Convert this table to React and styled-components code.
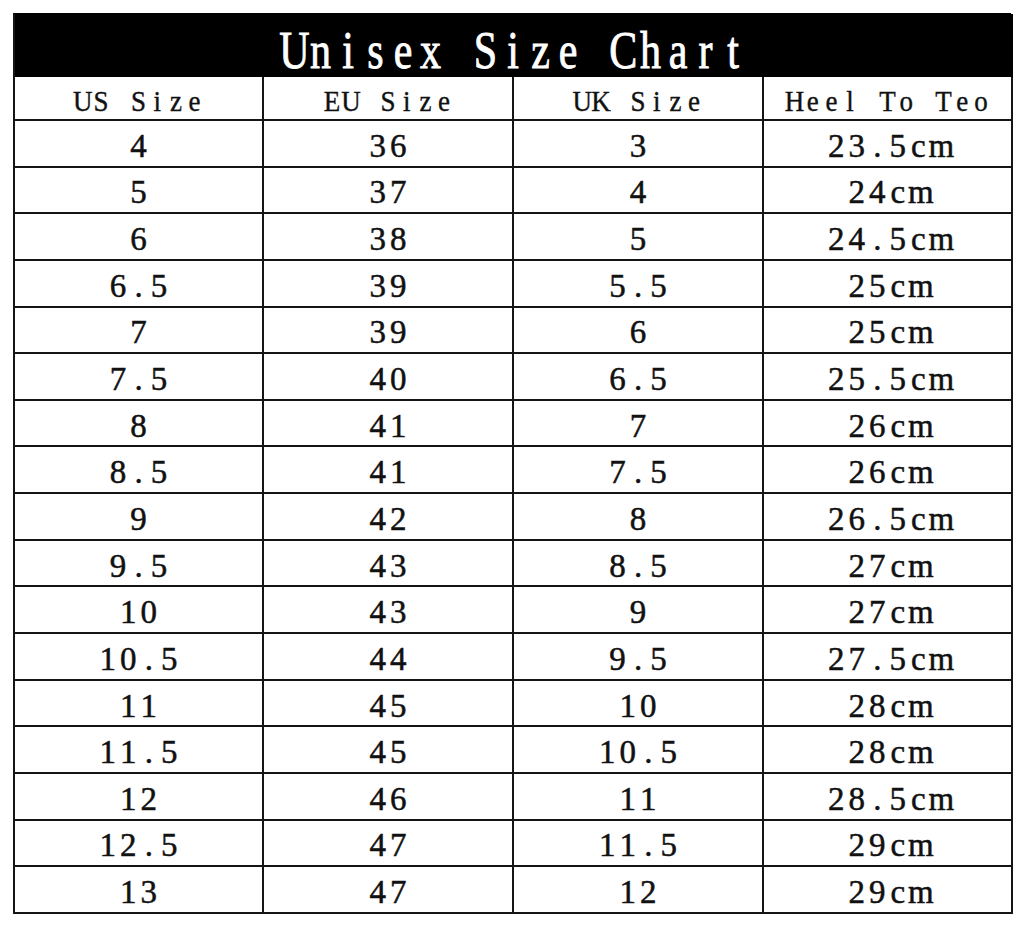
import React from "react";
import styled, { createGlobalStyle } from "styled-components";

const Global = createGlobalStyle`
  html, body { margin: 0; padding: 0; background: #fff; }
  body { font-family: "Liberation Serif", "Times New Roman", serif; color: #111; }
`;

const Page = styled.div`
  padding: 13px 12px 14px 13px;
  width: 1024px;
  box-sizing: border-box;
`;

const Table = styled.div`
  display: grid;
  grid-template-columns: 249px 250px 250px 249px;
  grid-template-rows: 63px 44px repeat(17, 46.65px);
  border-left: 2px solid #151515;
  border-top: 1px solid #000;
  width: 998px;
  box-sizing: border-box;
`;

const Title = styled.div`
  grid-column: 1 / -1;
  background: #000;
  color: #fff;
  display: flex;
  align-items: center;
  justify-content: center;
  border-right: 2px solid #000;
  padding-top: ${(p) => p.$pt}px;
  box-sizing: border-box;
`;

const Cell = styled.div`
  display: flex;
  align-items: center;
  justify-content: center;
  border-right: 2px solid #151515;
  border-bottom: 2px solid #151515;
  box-sizing: border-box;
  padding-top: ${(p) => p.$pt}px;
  overflow: hidden;
`;

const Line = styled.span`
  display: inline-flex;
  font-size: ${(p) => p.$size}px;
  line-height: 1;
  transform: scaleY(${(p) => p.$sy || 1});
  -webkit-text-stroke: ${(p) => p.$stroke || 0}px currentColor;
`;

const Glyph = styled.span`
  display: inline-block;
  width: ${(p) => p.$w}px;
  text-align: center;
  white-space: pre;
`;

function Mono({ text, w, size, sy, stroke }) {
  return (
    <Line $size={size} $sy={sy} $stroke={stroke}>
      {Array.from(text).map((c, i) => (
        <Glyph key={i} $w={w}>
          {c}
        </Glyph>
      ))}
    </Line>
  );
}

const headers = ["US Size", "EU Size", "UK Size", "Heel To Teo"];

const rows = [
  ["4", "36", "3", "23.5cm"],
  ["5", "37", "4", "24cm"],
  ["6", "38", "5", "24.5cm"],
  ["6.5", "39", "5.5", "25cm"],
  ["7", "39", "6", "25cm"],
  ["7.5", "40", "6.5", "25.5cm"],
  ["8", "41", "7", "26cm"],
  ["8.5", "41", "7.5", "26cm"],
  ["9", "42", "8", "26.5cm"],
  ["9.5", "43", "8.5", "27cm"],
  ["10", "43", "9", "27cm"],
  ["10.5", "44", "9.5", "27.5cm"],
  ["11", "45", "10", "28cm"],
  ["11.5", "45", "10.5", "28cm"],
  ["12", "46", "11", "28.5cm"],
  ["12.5", "47", "11.5", "29cm"],
  ["13", "47", "12", "29cm"],
];

export default function App() {
  return (
    <Page>
      <Global />
      <Table>
        <Title $pt={9}>
          <Mono text="Unisex Size Chart" w={27.5} size={42} sy={1.26} stroke={0.7} />
        </Title>
        {headers.map((h) => (
          <Cell key={h} $pt={7}>
            <Mono text={h} w={18.7} size={27} sy={1.06} stroke={0.35} />
          </Cell>
        ))}
        {rows.map((r, i) =>
          r.map((v, j) => (
            <Cell key={i + "-" + j} $pt={6}>
              <Mono text={v} w={20.5} size={33} sy={1.02} stroke={0.5} />
            </Cell>
          ))
        )}
      </Table>
    </Page>
  );
}
